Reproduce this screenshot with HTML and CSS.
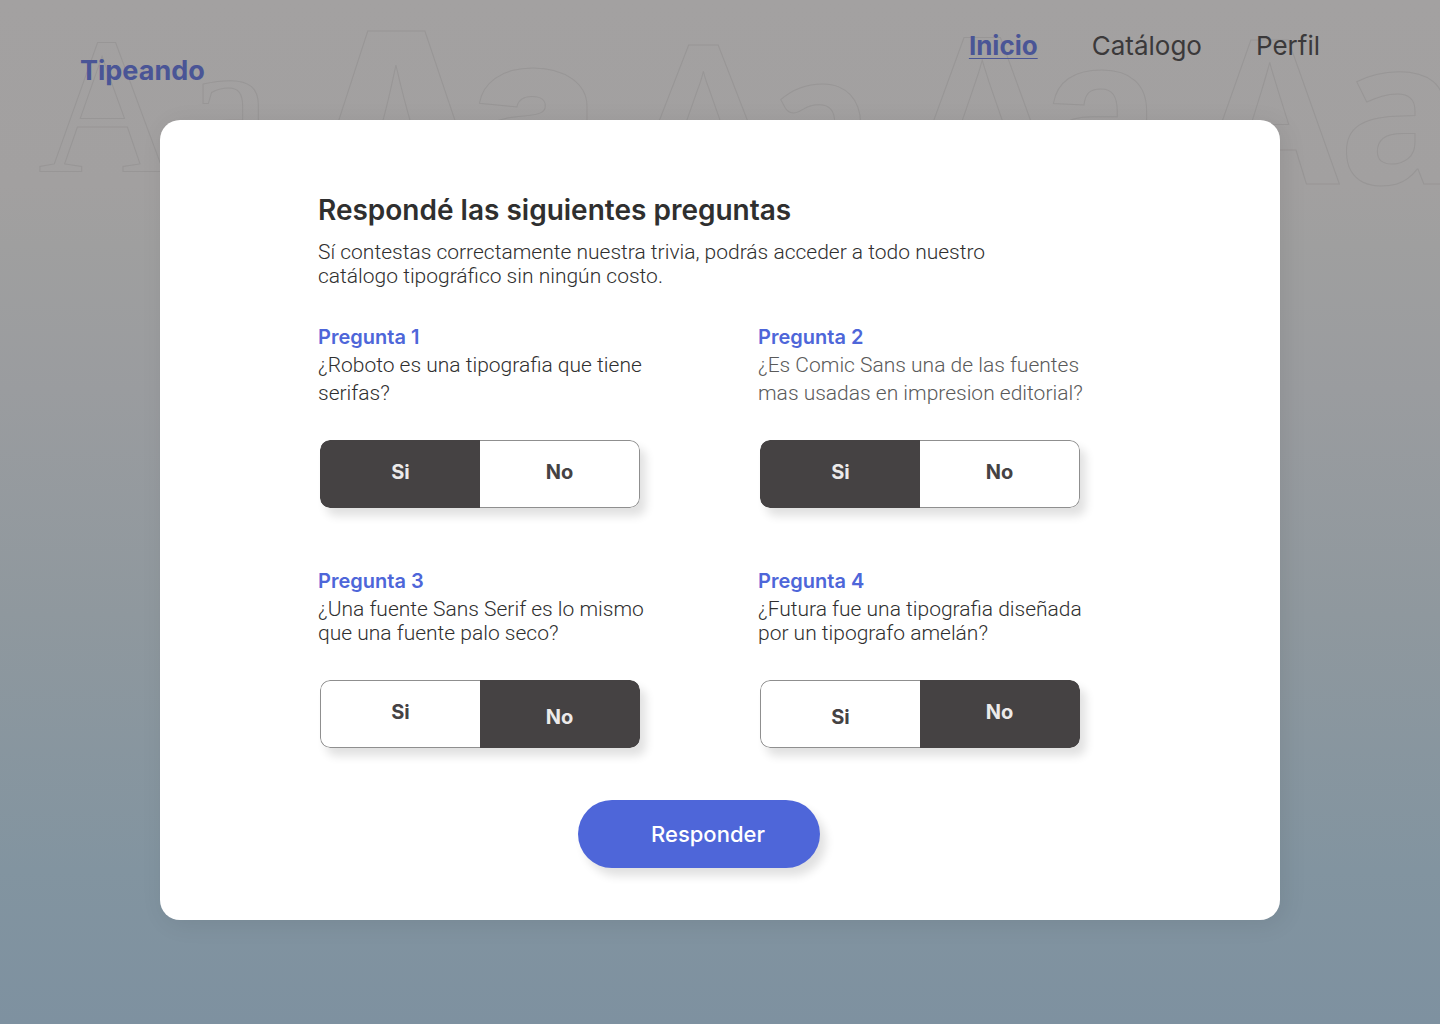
FILE: index.html
```html
<!DOCTYPE html>
<html lang="es">
<head>
<meta charset="utf-8">
<meta name="viewport" content="width=device-width, initial-scale=1">
<title>Tipeando</title>
<link rel="stylesheet" href="styles.css">
</head>
<body>
<svg class="specimens" aria-hidden="true" width="1440" height="220" viewBox="0 0 1440 220">
  <text class="serif" y="172"><tspan x="38">A</tspan><tspan x="186">a</tspan></text>
  <text class="black" y="185"><tspan x="313">A</tspan><tspan x="471">a</tspan></text>
  <text class="humanist" y="185"><tspan x="636">A</tspan><tspan x="772">a</tspan></text>
  <text class="grotesk" y="185"><tspan x="905">A</tspan><tspan x="1042">a</tspan></text>
  <text class="open" y="184"><tspan x="1200">A</tspan><tspan x="1338">a</tspan></text>
</svg>

<header class="topbar">
  <a class="logo" href="#">Tipeando</a>
  <nav class="nav">
    <a class="active" href="#" aria-current="page">Inicio</a>
    <a href="#">Catálogo</a>
    <a href="#">Perfil</a>
  </nav>
</header>

<main class="card">
  <h1>Respondé las siguientes preguntas</h1>
  <p class="intro">Sí contestas correctamente nuestra trivia, podrás acceder a todo nuestro catálogo tipográfico sin ningún costo.</p>
  <form class="quiz">
    <div class="questions">
      <fieldset class="question roomy">
        <legend>Pregunta 1</legend>
        <p>¿Roboto es una tipografia que tiene serifas?</p>
        <div class="toggle">
          <label><input type="radio" name="q1" checked><span>Si</span></label>
          <label><input type="radio" name="q1"><span>No</span></label>
        </div>
      </fieldset>
      <fieldset class="question roomy soft">
        <legend>Pregunta 2</legend>
        <p>¿Es Comic Sans una de las fuentes mas usadas en impresion editorial?</p>
        <div class="toggle">
          <label><input type="radio" name="q2" checked><span>Si</span></label>
          <label><input type="radio" name="q2"><span>No</span></label>
        </div>
      </fieldset>
      <fieldset class="question">
        <legend>Pregunta 3</legend>
        <p>¿Una fuente Sans Serif es lo mismo que una fuente palo seco?</p>
        <div class="toggle">
          <label><input type="radio" name="q3"><span>Si</span></label>
          <label class="low"><input type="radio" name="q3" checked><span>No</span></label>
        </div>
      </fieldset>
      <fieldset class="question">
        <legend>Pregunta 4</legend>
        <p>¿Futura fue una tipografia diseñada por un tipografo amelán?</p>
        <div class="toggle">
          <label class="low"><input type="radio" name="q4"><span>Si</span></label>
          <label><input type="radio" name="q4" checked><span>No</span></label>
        </div>
      </fieldset>
    </div>
    <button class="submit" type="submit">Responder</button>
  </form>
</main>
</body>
</html>
```
FILE: styles.css
```css
* {
  box-sizing: border-box;
}

body {
  position: relative;
  margin: 0;
  min-height: 100vh;
  overflow-x: hidden;
  padding-bottom: 104px;
  background: linear-gradient(#a3a1a1 0%, #a2a0a0 18%, #9f9f9f 24%, #9a9c9f 38%, #8f989e 60%, #8294a0 85%, #7e91a0 100%);
  color: #2f2f2f;
  font-family: Inter, "Liberation Sans", sans-serif;
}

.specimens {
  position: absolute;
  top: 0;
  left: 0;
  z-index: -1;
  fill: none;
  stroke: #8c8a8a;
  stroke-opacity: 0.45;
  stroke-width: 1;
}

.serif { font: 194px "Liberation Serif", serif; }
.black { font: 900 212px Inter, sans-serif; }
.humanist { font: 900 192px Lato, sans-serif; }
.grotesk { font: bold 214px "Liberation Sans", sans-serif; }
.open { font: bold 202px "Open Sans", sans-serif; }

.topbar {
  display: flex;
  justify-content: space-between;
  align-items: flex-start;
  height: 120px;
  padding: 30px 120px 0 80px;
  font-size: 26px;
  line-height: 32px;
}

.topbar a {
  color: #3b393a;
  text-decoration: none;
}

.topbar .logo {
  margin-top: 25px;
  color: #4a5596;
  font-size: 27px;
  font-weight: 700;
}

.nav {
  display: flex;
  gap: 54px;
}

.topbar .active {
  color: #4a5596;
  font-weight: 700;
  text-decoration: underline;
  text-decoration-thickness: 1px;
  text-underline-offset: 3px;
}

.card {
  max-width: 1120px;
  min-height: 800px;
  margin: 0 auto;
  padding: 72px 158px 52px;
  border-radius: 20px;
  background: #fff;
  box-shadow: 4px 4px 24px rgba(0, 0, 0, 0.08);
}

h1 {
  margin: 0;
  font-size: 28px;
  font-weight: 600;
  line-height: 36px;
}

.intro {
  max-width: 680px;
  margin: 12px 0 0;
  font-family: Roboto, sans-serif;
  font-size: 21px;
  font-weight: 300;
  line-height: 24px;
}

.questions {
  display: grid;
  grid-template-columns: repeat(auto-fit, 328px);
  gap: 59px 112px;
  margin-top: 35px;
}

.question {
  min-width: 0;
  margin: 0;
  padding: 0;
  border: 0;
  font-size: 20px;
}

legend {
  padding: 0;
  color: #4e66d9;
  font-weight: 600;
  line-height: 28px;
}

.question p {
  margin: 0;
  padding: 2px 0 35px;
  font-family: Roboto, sans-serif;
  font-size: 21px;
  font-weight: 300;
  line-height: 24px;
}

.question.roomy p {
  padding: 0 0 33px;
  line-height: 28px;
}

.soft p {
  color: #5a5a5a;
}

.toggle {
  display: flex;
  width: 320px;
  height: 68px;
  margin-left: 2px;
  overflow: hidden;
  border-radius: 10px;
  box-shadow: 6px 8px 10px rgba(0, 0, 0, 0.12);
}

.toggle label {
  display: flex;
  flex: 1;
}

.toggle input {
  position: absolute;
  opacity: 0;
}

.toggle span {
  display: flex;
  flex: 1;
  align-items: center;
  justify-content: center;
  padding-bottom: 4px;
  border: 1px solid #8f8f8f;
  background: #fff;
  color: #454243;
  font-weight: 700;
}

.toggle label:first-child span {
  border-right: 0;
  border-radius: 10px 0 0 10px;
}

.toggle label:last-child span {
  border-left: 0;
  border-radius: 0 10px 10px 0;
}

.toggle input:checked + span {
  border-color: #454243;
  background: #454243;
  color: #eceaea;
}

.toggle .low span {
  padding: 6px 0 0;
}

.submit {
  display: block;
  width: 242px;
  height: 68px;
  margin: 52px 0 0 260px;
  padding: 0 0 0 18px;
  border: 0;
  border-radius: 34px;
  background: #4e66d9;
  box-shadow: 6px 8px 10px rgba(0, 0, 0, 0.12);
  color: #fff;
  font: 500 22px Inter, sans-serif;
}
```
